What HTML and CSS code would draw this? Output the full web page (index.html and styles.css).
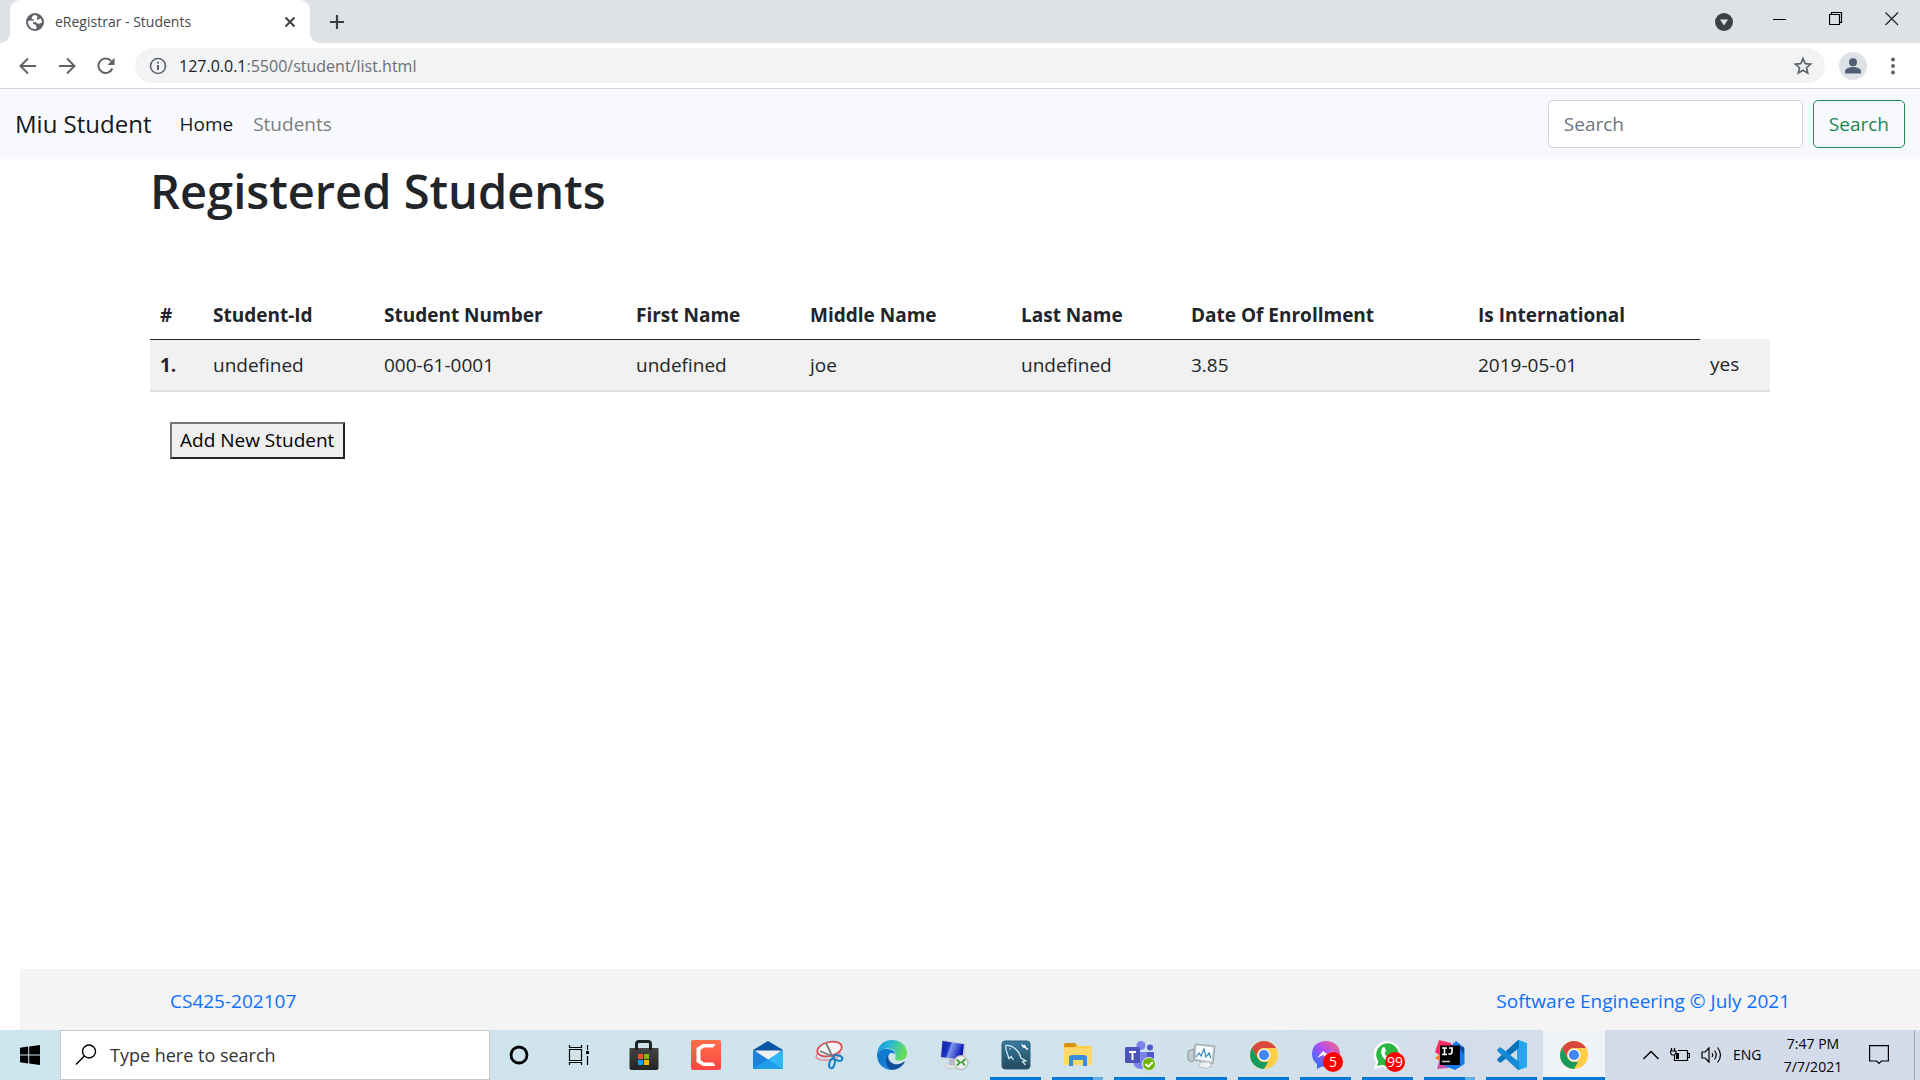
FILE: index.html
```html
<!DOCTYPE html>
<html lang="en">
<head>
<meta charset="utf-8">
<meta name="viewport" content="width=device-width, initial-scale=1">
<title>eRegistrar - Students</title>
<link rel="stylesheet" href="styles.css">
</head>
<body>
<div class="tabstrip">
  <div class="tab">
    <svg class="tab-icon" viewBox="0 0 18 18" width="18" height="18" aria-hidden="true"><circle cx="9" cy="9" r="9" fill="#5f6368"/><path d="M9.500 2C7.500 2 6 3.200 5.500 5C6 6.500 7.500 6 8 7C8 8.200 6.500 7.800 5 7.500L2 8C1.800 10 2.500 12 4 13.800C5 15.300 7 16.200 9 16C10.500 16 11 15 10.500 14C9.500 13 10 12 9.500 11.500C8 11.500 6.500 11 7 9.500C8.500 8.500 10.500 9.500 11.500 10.500C12.500 11 14.500 10.500 16 9.500C16 7.500 15 6 14 5C13.500 6.500 12 7 11 6.500C10 5.500 12 4.500 11.500 3.500Z" fill="#fff"/></svg>
    <span class="tab-title">eRegistrar - Students</span>
    <button class="icon-btn" aria-label="Close tab"><svg viewBox="0 0 12 12" width="12" height="12"><path d="M1.500 1.500L10.500 10.500M10.500 1.500L1.500 10.500" stroke="#3c4043" stroke-width="2" fill="none"/></svg></button>
  </div>
  <button class="icon-btn new-tab" aria-label="New tab"><svg viewBox="0 0 16 16" width="16" height="16"><path d="M8 1V15M1 8H15" stroke="#3c4043" stroke-width="2.200"/></svg></button>
  <div class="window-controls">
    <button class="icon-btn search-tabs" aria-label="Search tabs"><svg viewBox="0 0 18 18" width="18" height="18"><circle cx="9" cy="9" r="9" fill="#3c4043"/><path d="M5 6.500H13L9 12.500Z" fill="#dee1e6"/></svg></button>
    <button class="icon-btn" aria-label="Minimize"><svg viewBox="0 0 14 14" width="14" height="14"><path d="M0 7.500H13" stroke="#000"/></svg></button>
    <button class="icon-btn" aria-label="Restore"><svg viewBox="0 0 14 14" width="14" height="14"><path d="M.5 2.500H10.500V12.500H.5ZM2.500 2.500V.5H12.500V10.500H10.500" fill="none" stroke="#000" stroke-width="1.200"/></svg></button>
    <button class="icon-btn" aria-label="Close"><svg viewBox="0 0 14 14" width="14" height="14"><path d="M.5 .5L13 13M13 .5L.5 13" stroke="#222" stroke-width="1.200"/></svg></button>
  </div>
</div>
<div class="toolbar">
  <div class="history">
    <button class="icon-btn" aria-label="Back"><svg viewBox="0 0 18 18" width="18" height="18"><path d="M17 9H2M9 1.500L1.500 9L9 16.500" fill="none" stroke="#5f6368" stroke-width="2"/></svg></button>
    <button class="icon-btn" aria-label="Forward"><svg viewBox="0 0 18 18" width="18" height="18"><path d="M1 9H16M9 1.500L16.500 9L9 16.500" fill="none" stroke="#5f6368" stroke-width="2"/></svg></button>
    <button class="icon-btn" aria-label="Reload"><svg viewBox="0 0 18 18" width="18" height="18"><path d="M15.300 11.500A7.200 7.200 0 1 1 14.200 4.200" fill="none" stroke="#5f6368" stroke-width="2"/><path d="M17.500 .8V8H10.500Z" fill="#5f6368"/></svg></button>
  </div>
  <div class="omnibox">
    <svg viewBox="0 0 18 18" width="18" height="18" aria-hidden="true"><circle cx="9" cy="9" r="7.500" fill="none" stroke="#5f6368" stroke-width="1.600"/><path d="M9 8V13M9 4.700V6.500" stroke="#5f6368" stroke-width="2"/></svg>
    <span class="url"><span class="host">127.0.0.1</span>:5500/student/list.html</span>
    <button class="icon-btn" aria-label="Bookmark"><svg viewBox="0 0 20 20" width="20" height="20"><path d="M10 2.500L12.200 7.600L17.600 8.100L13.500 11.700L14.700 17L10 14.200L5.300 17L6.500 11.700L2.400 8.100L7.800 7.600Z" fill="none" stroke="#5f6368" stroke-width="1.700"/></svg></button>
  </div>
  <button class="avatar" aria-label="Profile"><svg viewBox="0 0 28 28" width="28" height="28"><circle cx="14" cy="14" r="14" fill="#dee1e6"/><circle cx="14" cy="10.300" r="4" fill="#4f5d75"/><path d="M6 21.500V19.500C6 16.500 10 15 14 15S22 16.500 22 19.500V21.500Z" fill="#4f5d75"/></svg></button>
  <button class="icon-btn menu" aria-label="Menu"><svg viewBox="0 0 4 18" width="4" height="18"><g fill="#5f6368"><circle cx="2" cy="2.500" r="2"/><circle cx="2" cy="9" r="2"/><circle cx="2" cy="15.500" r="2"/></g></svg></button>
</div>

<nav class="navbar">
  <a class="brand" href="#">Miu Student</a>
  <a class="nav-link active" href="#">Home</a>
  <a class="nav-link" href="#">Students</a>
  <form class="search-form">
    <input class="search-input" type="search" placeholder="Search" aria-label="Search">
    <button class="search-btn" type="button">Search</button>
  </form>
</nav>

<main class="container">
  <h1>Registered Students</h1>
  <table class="students">
    <colgroup><col class="c-num"><col class="c-id"><col class="c-number"><col class="c-first"><col class="c-middle"><col class="c-last"><col class="c-date"><col class="c-intl"><col class="c-extra"></colgroup>
    <thead>
      <tr><th scope="col">#</th><th scope="col">Student-Id</th><th scope="col">Student Number</th><th scope="col">First Name</th><th scope="col">Middle Name</th><th scope="col">Last Name</th><th scope="col">Date Of Enrollment</th><th scope="col">Is International</th></tr>
    </thead>
    <tbody>
      <tr><th scope="row">1.</th><td>undefined</td><td>000-61-0001</td><td>undefined</td><td>joe</td><td>undefined</td><td>3.85</td><td>2019-05-01</td><td>yes</td></tr>
    </tbody>
  </table>
  <button class="add-btn" type="button">Add New Student</button>
</main>

<footer class="footer">
  <a href="#">CS425-202107</a>
  <a href="#">Software Engineering © July 2021</a>
</footer>

<div class="taskbar">
  <button class="start" aria-label="Start"><svg viewBox="0 0 20 20" width="20" height="20"><path d="M0 2.800L8.200 1.600V9.400H0ZM9.200 1.400L20 0V9.400H9.200ZM0 10.500H8.200V18.400L0 17.200ZM9.200 10.500H20V20L9.200 18.600Z"/></svg></button>
  <label class="task-search">
    <svg viewBox="0 0 22 22" width="22" height="22" aria-hidden="true"><circle cx="14" cy="7.500" r="6.500" fill="none" stroke="#000" stroke-width="1.400"/><path d="M9.300 12L1 20.500" stroke="#000" stroke-width="1.400"/></svg>
    <input type="text" placeholder="Type here to search" aria-label="Type here to search">
  </label>
  <button class="app" aria-label="Cortana"><svg viewBox="0 0 30 30" width="30" height="30"><circle cx="14" cy="15" r="8" fill="none" stroke="#000" stroke-width="2.800"/></svg></button>
  <button class="app" aria-label="Task View"><svg viewBox="0 0 30 30" width="30" height="30"><path d="M2.500 9.500H14.500V20.500H2.500ZM2.500 5V7.500H14.500V5M2.500 25V22.500H14.500V25M20.500 5V10M20.500 16V25" fill="none" stroke="#000" stroke-width="1.200"/><path d="M19 11H22V14H19Z"/></svg></button>
  <button class="app" aria-label="Microsoft Store"><svg viewBox="0 0 30 30" width="30" height="30"><defs><linearGradient id="bag" x2="0" y2="1"><stop stop-color="#444"/><stop offset="1" stop-color="#242424"/></linearGradient></defs><path d="M7.500 10V4Q7.500 1.500 10 1.500H19Q21.500 1.500 21.500 4V10" fill="none" stroke="#1d2528" stroke-width="3"/><path d="M.5 8H29.500V28Q29.500 30 27.500 30H2.500Q.5 30 .5 28Z" fill="url(#bag)"/><path d="M6 8H9V10Q7.500 12 6 10ZM20 8H23V10Q21.500 12 20 10Z" fill="#222"/><path d="M9 14H14V19H9Z" fill="#f25022"/><path d="M15 14H20V19H15Z" fill="#7fba00"/><path d="M9 20H14V25H9Z" fill="#00a4ef"/><path d="M15 20H20V25H15Z" fill="#ffb900"/></svg></button>
  <button class="app" aria-label="Camtasia"><svg viewBox="0 0 30 30" width="30" height="30"><defs><linearGradient id="cam" x2="0" y2="1"><stop stop-color="#ff7048"/><stop offset="1" stop-color="#ff4545"/></linearGradient></defs><rect width="30" height="30" rx="2" fill="url(#cam)"/><path d="M24.500 4H12L5.500 8V22L12 26H24.500L22 22.500H13L9.500 20V10L13 7.500H22Z" fill="#fff"/></svg></button>
  <button class="app" aria-label="Mail"><svg viewBox="0 0 30 30" width="30" height="30"><path d="M0 10L15 1L30 10L15 20Z" fill="#0a56a6"/><path d="M2 10.500H28L15 22Z" fill="#f1f1f1"/><path d="M0 10L30 29H0Z" fill="#1b86dc"/><path d="M30 10L0 29H30Z" fill="#32b8f4"/><path d="M0 10L15 19.500L0 29Z" fill="#1b83dc"/><path d="M15 19.500L30 29H0Z" fill="#209ce8"/></svg></button>
  <button class="app" aria-label="Snip &amp; Sketch"><svg viewBox="0 0 30 30" width="30" height="30"><g fill="none"><ellipse cx="13" cy="15" rx="12" ry="5" transform="rotate(-8 13 15)" stroke="#e88c92" stroke-width="1.400"/><ellipse cx="14.500" cy="9" rx="12.500" ry="7" transform="rotate(-14 14.500 9)" fill="#f5f5f5" stroke="#df4b54" stroke-width="1.700"/><path d="M11 3L18 18M5 11L19 17" stroke="#777" stroke-width="1.800"/><ellipse cx="23" cy="18" rx="4.500" ry="2.600" transform="rotate(15 23 18)" stroke="#187fc4" stroke-width="2"/><ellipse cx="17" cy="23.500" rx="2.600" ry="4.800" transform="rotate(15 17 23.500)" stroke="#187fc4" stroke-width="2"/></g></svg></button>
  <button class="app" aria-label="Microsoft Edge"><svg viewBox="0 0 30 30" width="30" height="30"><defs><linearGradient id="edgeTop" y1="0" x2="1" y2=".3"><stop stop-color="#1685d8"/><stop offset=".45" stop-color="#2bb8d8"/><stop offset="1" stop-color="#65dd58"/></linearGradient><linearGradient id="edgeLow" x2="1" y2="1"><stop stop-color="#0e78d0"/><stop offset="1" stop-color="#1583d8"/></linearGradient></defs><path d="M0 14C1 5 7 0 15 0C24 0 30 6 30 13C30 18 26.500 20.500 22.500 20.500C19 20.500 17.500 19 18.500 17C20 12 16 8.500 11 8.500C5 8.500 1 11 0 14Z" fill="url(#edgeTop)"/><path d="M0 14C2 10 6 8.500 10.500 9C15.500 9.300 18.500 12 18.500 15C17 12.500 14 12.500 12 14.500C9 20 14 27 22 26C18 30 12 31 7.500 28C2 25 0 20 0 14Z" fill="url(#edgeLow)"/><path d="M11 15.500C11 22 17 25.500 22 24C24.500 23.500 26 22 27.500 21.500C28 22 27.500 23 26.500 24C23 28.500 18 30.500 13.500 29.500C8.500 26 7.500 19 11 15.500Z" fill="#124f9b"/></svg></button>
  <button class="app" aria-label="Remote Desktop"><svg viewBox="0 0 30 30" width="30" height="30"><defs><linearGradient id="scr" x2="1" y2=".3"><stop stop-color="#0a1ea8"/><stop offset=".4" stop-color="#1e36c4"/><stop offset=".5" stop-color="#8097ec"/><stop offset="1" stop-color="#0714b4"/></linearGradient></defs><ellipse cx="13" cy="25.500" rx="8" ry="3.500" fill="#dfe2e4" stroke="#b9bfc4" stroke-width=".6"/><path d="M10 18L17 19V25H10Z" fill="#b4bbc3"/><path d="M3 0L27 3.500L25 21L1 18Z" fill="#c9cdd2"/><path d="M3.500 1L25 4.300L23 19.500L2 17Z" fill="url(#scr)"/><circle cx="22" cy="22.500" r="7" fill="#ececec" stroke="#aaa"/><path d="M17.500 19.500L21 22.500L18 25.500M26.500 19L23 22L26 25.500" fill="none" stroke="#36a43b" stroke-width="1.800"/></svg></button>
  <button class="app open" aria-label="MySQL Workbench"><svg viewBox="0 0 30 30" width="30" height="30"><defs><linearGradient id="sql" x2="0" y2="1"><stop stop-color="#397ba0"/><stop offset="1" stop-color="#23485a"/></linearGradient></defs><rect x="1" y="1" width="28" height="28" rx="3" fill="url(#sql)" stroke="#2f617c"/><path d="M8 19L6.500 14Q4 8 5 5.500Q10 5 14 8.500Q19 13 20 18L25 21L21.500 21.500L24.500 25M8 19L10 16.500L12.500 20M8.500 8.500L9.500 9.500" fill="none" stroke="#d9edf5" stroke-width="1.200"/><path d="M20.500 3.500L22.500 5.500L24 4.500L25 7L27.500 9L26 10L24 8Q20.500 8 20.500 3.500Z" fill="#fff"/></svg></button>
  <button class="app open grouped" aria-label="File Explorer"><svg viewBox="0 0 30 30" width="30" height="30"><path d="M1 5Q1 3 3 3H12L15 6H27Q28.500 6 28.500 8V25H1Z" fill="#ffca45"/><path d="M1 7V4.500Q1 3 3 3H12L14 5L12 7Z" fill="#d9940b"/><path d="M1 8H28.500V25H1Z" fill="#ffd869"/><path d="M6 26V18Q6 15 9 15H21Q24 15 24 18V26H20V20H10V26Z" fill="#3a8bdb"/></svg></button>
  <button class="app open" aria-label="Microsoft Teams"><svg viewBox="0 0 32 30" width="32" height="30"><circle cx="17" cy="5.500" r="4.500" fill="#7b83eb"/><circle cx="26" cy="7.500" r="3" fill="#5059c9"/><path d="M21 12H30V19Q30 24 25 24H21Z" fill="#5059c9"/><path d="M10 12H23V22Q23 29 16 29Q10 28 9 22Z" fill="#7b83eb"/><rect x="1" y="7" width="15" height="16" rx="1.500" fill="#4b53bc"/><path d="M5 11H12V13H9.500V20H7.500V13H5Z" fill="#fff"/><circle cx="25" cy="24" r="6.500" fill="#6bb700" stroke="#eee"/><path d="M21.500 24L24.300 26.700L28.800 22" fill="none" stroke="#fff" stroke-width="2"/></svg></button>
  <button class="app open" aria-label="Resource Monitor"><svg viewBox="0 0 30 30" width="30" height="30"><path d="M1 11L7 9V20L5 22L1 20Z" fill="#c4cbd0" stroke="#8b969c"/><path d="M8 4L28 6L26 24L7 20Z" fill="#c5cdd2" stroke="#9ba5ab"/><path d="M9.500 5.500L26 7.500L24.500 21.500L8.500 18.500Z" fill="#f7fcff"/><path d="M9 17L12 13L14 16L17 9L19 17L22 13L24 18" fill="none" stroke="#3387b3" stroke-width="1.200"/><path d="M14 22H22L25 26L19 28.500L11 26Z" fill="#eff1f2" stroke="#b8bec1"/></svg></button>
  <button class="app open" aria-label="Google Chrome"><svg viewBox="0 0 30 30" width="30" height="30"><g id="chrome"><circle cx="15" cy="15" r="14" fill="#ffcd46"/><path d="M2.900 8A14 14 0 0 1 27.100 8H15A7 7 0 0 0 8.900 18.500Z" fill="#d8483e"/><path d="M2.900 8L8.900 18.500Q11 22 15 22H21L15 29A14 14 0 0 1 2.900 8Z" fill="#169b5d"/><path d="M15 29L21 18.500V22L16 29Z" fill="#ffcd46"/><circle cx="15" cy="15" r="6.500" fill="#f1f1f1"/><circle cx="15" cy="15" r="5" fill="#4285f4"/></g></svg></button>
  <button class="app open" aria-label="Messenger"><svg viewBox="0 0 30 30" width="30" height="30"><defs><linearGradient id="msg" x1="1" y1="0" x2="0" y2="1"><stop stop-color="#ff6d70"/><stop offset=".45" stop-color="#b14df5"/><stop offset="1" stop-color="#087cff"/></linearGradient></defs><path d="M15 1C7 1 1 6 1 14Q1 20 6 24V29L11 26.500C22 29 29 22 29 14C29 6 23 1 15 1Z" fill="url(#msg)"/><path d="M6 18L12 11L16 14L22 11L16 18L12 15Z" fill="#fff"/></svg><span class="badge">5</span></button>
  <button class="app open" aria-label="WhatsApp"><svg viewBox="0 0 30 30" width="30" height="30"><path d="M1 29L3 22A13.500 13.500 0 1 1 9 27Z" fill="#fff"/><path d="M4 26L5.500 21.500A11.300 11.300 0 1 1 9.500 24.800Z" fill="#2cb742"/><path d="M9 8Q11 6 12 8L13 11L11.500 13Q13 17 17 18.500L19 17L22 19Q22 22 18 22Q9 20 8 12Z" fill="#fff"/></svg><span class="badge">99</span></button>
  <button class="app open grouped" aria-label="IntelliJ IDEA"><svg viewBox="0 0 30 30" width="30" height="30"><path d="M4 0L16 3L20 15L5 28L8 18L0 12Z" fill="#fb2d66"/><path d="M0 18L6 13V22Z" fill="#fc801d"/><path d="M2 29L6 14L18 24L13 28Z" fill="#c950a8"/><path d="M21 1L29.500 8V24L20 30L10 26L16 6Z" fill="#1178f2"/><path d="M22 6L29 7V14Z" fill="#1446a0"/><rect x="5" y="5.500" width="20" height="19.500"/><path d="M7 8H12M9.500 8V14M7 14.500H12M14 8H18M17 8V12Q17 14.500 13.500 13.800" fill="none" stroke="#fff" stroke-width="1.600"/><path d="M7 21.500H15" stroke="#ccc" stroke-width="1.500"/></svg></button>
  <button class="app open" aria-label="Visual Studio Code"><svg viewBox="0 0 30 30" width="30" height="30"><path d="M22 0L30 3V27L22 30L20 28V2Z" fill="#27a5ee"/><path d="M22 0L22 8L4 22.500Q3 23 2 22L.5 20.500Q-.3 19.500 .8 18.500L20.500 .5Q21 0 22 0Z" fill="#0872bb"/><path d="M22 30L22 22L4 7.500Q3 7 2 8L.5 9.500Q-.3 10.500 .8 11.500L20.500 29.500Q21 30 22 30Z" fill="#168bd5"/></svg></button>
  <button class="app open current" aria-label="Google Chrome, active"><svg viewBox="0 0 30 30" width="30" height="30"><use href="#chrome"/></svg></button>
  <div class="tray">
    <svg viewBox="0 0 16 10" width="16" height="10" aria-hidden="true"><path d="M.5 9L8 1.500L15.500 9" fill="none" stroke="#000" stroke-width="1.400"/></svg>
    <svg viewBox="0 0 20 14" width="20" height="14" aria-hidden="true"><path d="M8 2.500H17.500V12.500H4.500V7M17.500 5.500H19.500V9.500H17.500M1.500 0V3M4.500 0V3M0 3H6V5L4.500 7H2L.5 5V3" fill="none" stroke="#000" stroke-width="1.200"/><path d="M6 5H9V11H6Z"/></svg>
    <svg viewBox="0 0 21 18" width="21" height="18" aria-hidden="true"><path d="M1 6H4L8 2V16L4 12H1ZM11 7Q12.500 9 11 11M13.500 4.500Q17 9 13.500 13.500M16.500 1.500Q22.500 9 16.500 16.500" fill="none" stroke="#000" stroke-width="1.200"/></svg>
    <span class="lang">ENG</span>
    <div class="clock"><span>7:47 PM</span><span>7/7/2021</span></div>
    <button class="notify" aria-label="Notifications"><svg viewBox="0 0 20 20" width="20" height="20"><path d="M.6 .6H19.400V16H12.500L10 18.500L7.500 16H.6Z" fill="none" stroke="#000" stroke-width="1.200"/></svg></button>
  </div>
</div>
</body>
</html>
```
FILE: styles.css
```css
* {
  box-sizing: border-box;
}

body {
  margin: 0;
  min-height: 100vh;
  display: flex;
  flex-direction: column;
  background: #fff;
  color: #212529;
  font: 19px/30px "Open Sans", "Noto Sans", sans-serif;
}

a {
  text-decoration: none;
}

button,
input {
  font: inherit;
}

svg {
  display: block;
  flex: none;
}

.icon-btn,
.avatar,
.start,
.app,
.notify {
  display: flex;
  align-items: center;
  justify-content: center;
  padding: 0;
  border: 0;
  background: none;
}

/* Browser window */
.tabstrip {
  display: flex;
  height: 43px;
  padding-left: 10px;
  background: #dee1e6;
}

.tab {
  position: relative;
  display: flex;
  align-items: center;
  gap: 11px;
  width: 300px;
  padding: 0 14px 0 16px;
  border-radius: 10px 10px 0 0;
  background: #fff;
  color: #45494d;
  font-size: 14px;
  line-height: 20px;
}

/* Flared feet where the tab meets the toolbar */
.tab::before,
.tab::after {
  content: "";
  position: absolute;
  bottom: 0;
  width: 10px;
  height: 10px;
}

.tab::before {
  right: 100%;
  background: radial-gradient(circle at 0 0, #dee1e6 10px, #fff 10px);
}

.tab::after {
  left: 100%;
  background: radial-gradient(circle at 100% 0, #dee1e6 10px, #fff 10px);
}

.tab-title {
  flex: 1;
}

.new-tab {
  width: 54px;
}

.window-controls {
  display: flex;
  height: 38px;
  margin-left: auto;
}

.window-controls .icon-btn {
  width: 56px;
}

.window-controls .search-tabs {
  height: 43px;
}

.toolbar {
  display: flex;
  align-items: center;
  height: 46px;
  padding-right: 25px;
  border-bottom: 1px solid #d5d7db;
}

.history {
  display: flex;
  gap: 21px;
  width: 135px;
  padding-left: 19px;
}

.omnibox {
  display: flex;
  flex: 1;
  align-items: center;
  gap: 12px;
  height: 35px;
  padding: 0 12px 0 14px;
  border-radius: 18px;
  background: #f1f3f4;
  font-size: 16px;
}

.url {
  flex: 1;
  color: #6a6e73;
}

.host {
  color: #202124;
}

.avatar {
  margin-left: 14px;
}

.menu {
  margin-left: 24px;
}

/* Site header */
.navbar {
  display: flex;
  align-items: center;
  height: 70px;
  padding: 0 15px;
  background: #f8f9fc;
}

.brand {
  margin-right: 18px;
  color: #16181b;
  font-size: 24px;
}

.nav-link {
  padding: 0 10px;
  color: #7c7d7f;
}

.nav-link.active {
  color: #16181b;
}

.search-form {
  display: flex;
  gap: 10px;
  margin-left: auto;
}

.search-input {
  width: 255px;
  height: 48px;
  padding: 0 15px;
  border: 1px solid #ced4da;
  border-radius: 5px;
  background: #fff;
}

.search-input::placeholder {
  color: #6c757d;
}

.search-btn {
  height: 48px;
  padding: 0 15px;
  border: 1px solid #198754;
  border-radius: 5px;
  background: transparent;
  color: #198754;
}

/* Student list */
.container {
  width: 100%;
  max-width: 1650px;
  margin: 0 auto;
  padding: 0 15px;
}

h1 {
  margin: 0 0 65px;
  font-size: 47px;
  font-weight: 600;
  line-height: 64px;
}

.students {
  width: 100%;
  margin-bottom: 30px;
  table-layout: fixed;
  border-collapse: collapse;
  text-align: left;
}

.students th,
.students td {
  height: 51px;
  padding: 10px;
}

.students th {
  font-weight: 700;
}

.students thead th {
  padding: 12px 10px 8px;
  border-bottom: 1px solid #212529;
}

.students tbody tr {
  border-bottom: 2px solid #dee2e6;
  background: #f1f1f1;
}

.c-num { width: 53px; }
.c-id { width: 171px; }
.c-number { width: 252px; }
.c-first { width: 174px; }
.c-middle { width: 211px; }
.c-last { width: 170px; }
.c-date { width: 287px; }
.c-intl { width: 232px; }
.c-extra { width: 70px; }

.add-btn {
  height: 37px;
  margin-left: 20px;
  padding: 0 9px 0 8px;
  border: 2px solid;
  border-color: #767676 #212529 #212529 #767676;
  background: #efefef;
  color: #000;
}

.footer {
  display: flex;
  justify-content: space-between;
  margin: auto 0 0 20px;
  padding: 17px 130px 14px 150px;
  background: #f4f4f4;
}

.footer a {
  color: #0d6efd;
}

/* Desktop taskbar */
.taskbar {
  display: flex;
  height: 50px;
  background: linear-gradient(90deg, #cde5ee, #d0e3ec 55%, #d4dce9 82%, #d3daea);
  color: #000;
}

.start {
  width: 60px;
}

.task-search {
  display: flex;
  align-items: center;
  gap: 13px;
  width: 430px;
  margin-right: -1px;
  padding: 0 14px;
  border: 1px solid #c8c8c8;
  background: #fff;
}

.task-search input {
  flex: 1;
  min-width: 0;
  padding: 0;
  border: 0;
  background: none;
  font-size: 18px;
}

.task-search input::placeholder {
  color: #333;
}

.app {
  position: relative;
  flex: none;
  width: 62px;
}

.open::after {
  content: "";
  position: absolute;
  right: 6px;
  bottom: 0;
  left: 5px;
  height: 3px;
  background: #0078d7;
}

.grouped::after {
  background: linear-gradient(90deg, #0078d7 80%, #66ade5 80%);
}

.current {
  background: #eff2f7;
}

.current::after {
  right: 0;
  left: 0;
}

.badge {
  position: absolute;
  top: 22px;
  left: 28px;
  width: 20px;
  height: 20px;
  border-radius: 50%;
  background: #f00;
  color: #fff;
  font-size: 14px;
  line-height: 20px;
  text-align: center;
}

.tray {
  display: flex;
  align-items: center;
  gap: 11px;
  margin-left: auto;
  margin-right: 5px;
  border-right: 1px solid #a4abb8;
  font-size: 14px;
}

.lang {
  width: 30px;
}

.clock {
  display: flex;
  flex-direction: column;
  width: 78px;
  line-height: 23px;
  text-align: center;
}

.notify {
  margin-right: 25px;
  margin-left: 6px;
}
```
